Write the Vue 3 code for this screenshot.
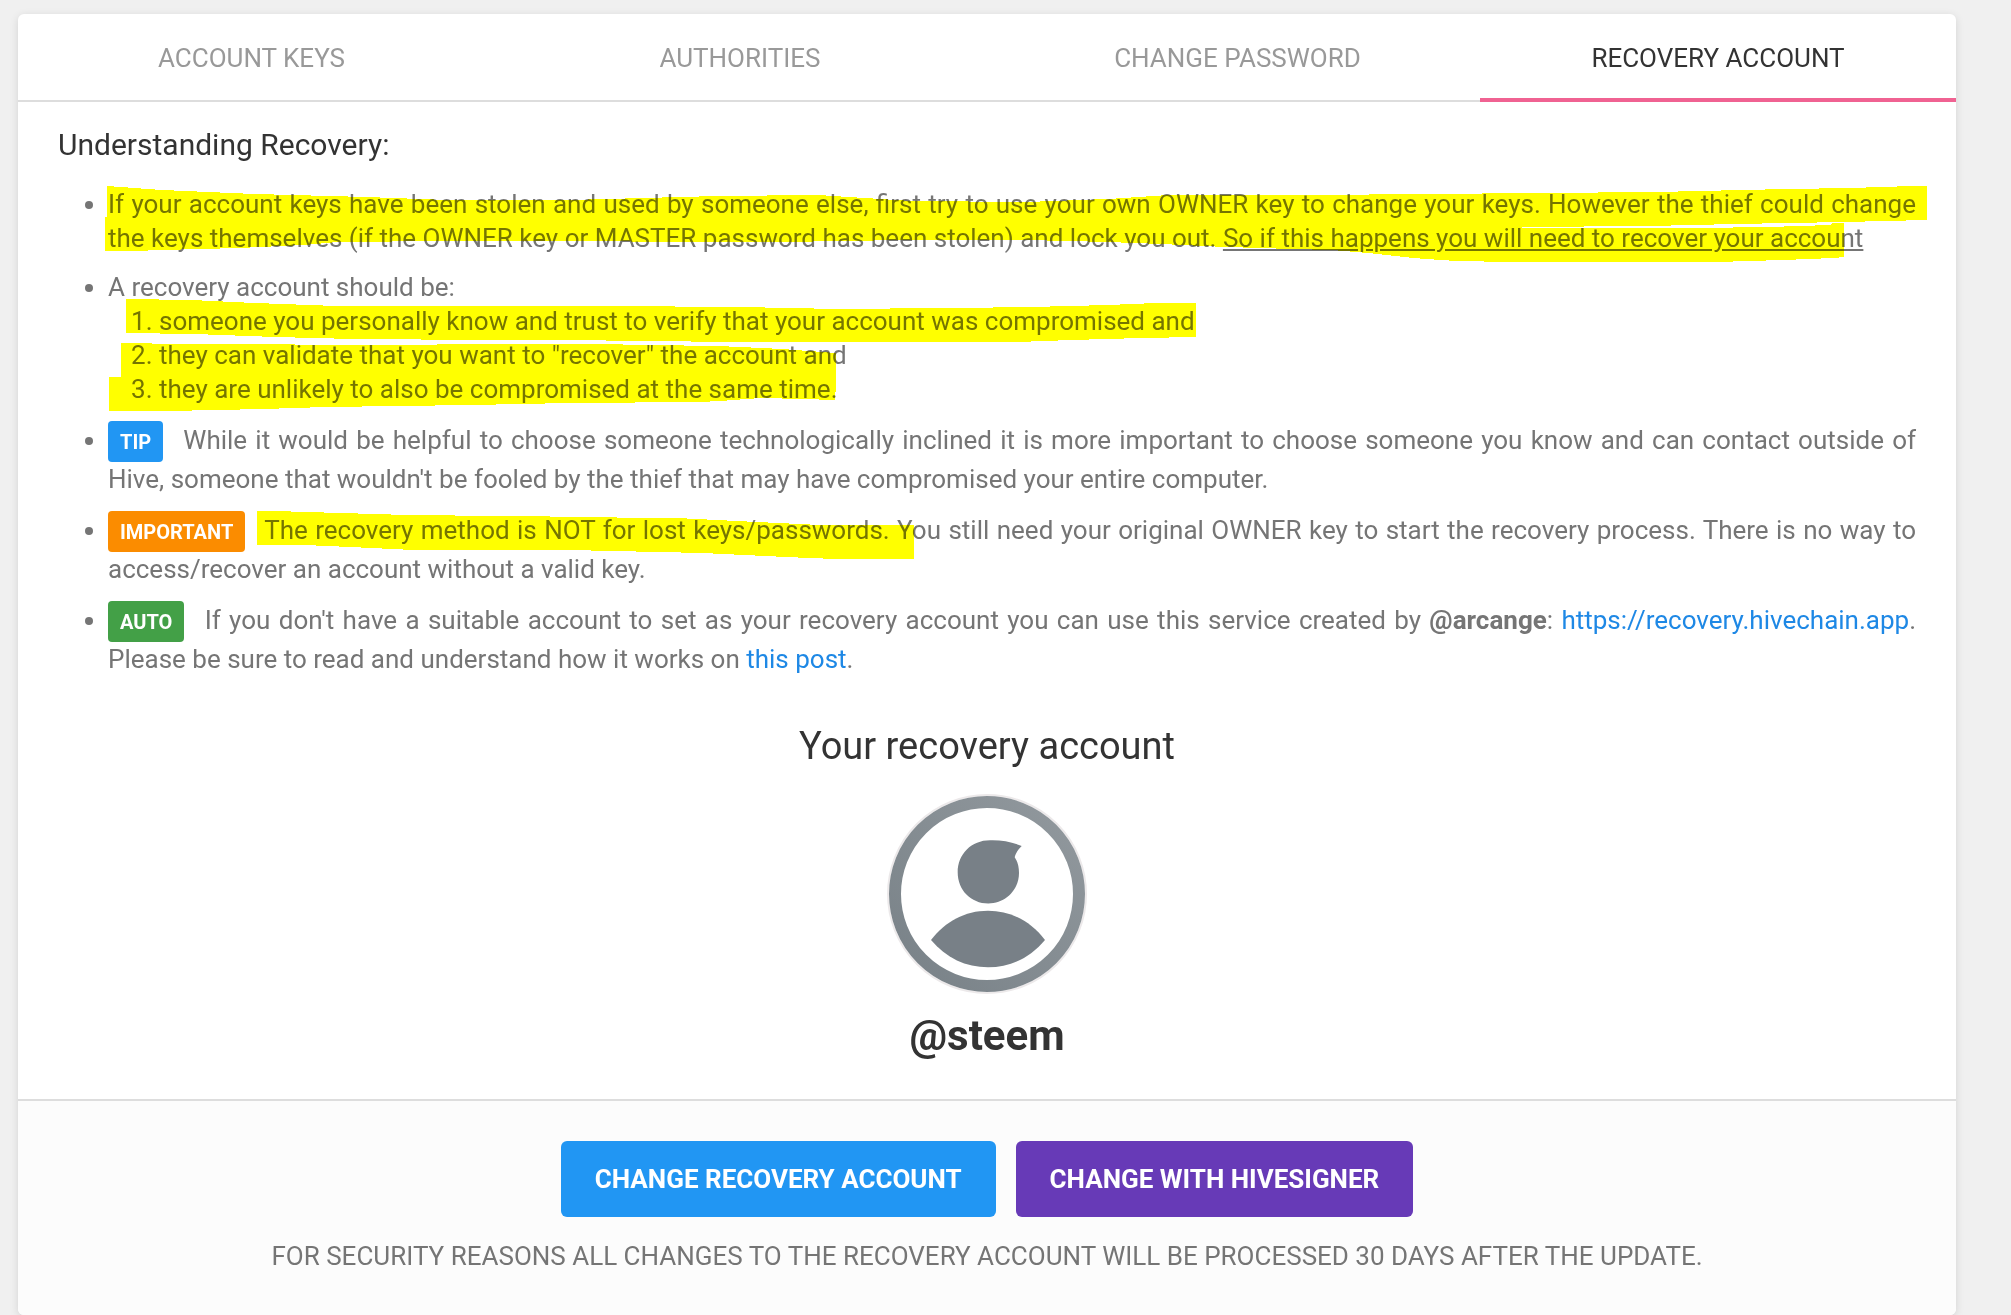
<script setup>
const tabs = [
  { label: 'Account keys', href: '#keys' },
  { label: 'Authorities', href: '#authorities' },
  { label: 'Change password', href: '#password' },
  { label: 'Recovery account', href: '#recovery', active: true },
]

// Marker strokes drawn over the list, in the order they appear.
const strokes = [
  '107,186 162,190 255,194 366,197 447,200 570,200 717,196 818,195 912,201 1026,202 1108,199 1169,195 1312,195 1540,193 1656,192 1787,189 1851,188 1912,186 1927,186 1927,220 1844,222 1735,224 1649,226 1522,227 1522,228 1697,228 1769,227 1830,225 1833,223 1844,223 1844,257 1833,258 1783,260 1717,262 1511,262 1456,261 1413,258 1368,253 1332,250 1292,249 1226,247 1161,244 1108,242 1026,240 904,240 782,242 692,242 570,241 447,241 337,242 304,245 239,248 162,250 133,251 105,251 105,217 107,217',
  '126,299 191,300 255,303 337,306 633,306 717,307 810,308 818,309 961,308 1026,307 1073,306 1135,304 1153,303 1196,303 1196,337 1141,338 1071,340 1018,342 731,342 651,341 561,340 488,340 353,339 276,337 194,334 126,333',
  '121,343 182,344 406,345 468,344 594,344 651,345 717,346 741,347 782,349 836,353 836,385 835,400 802,399 761,398 720,401 700,402 570,403 472,405 325,407 264,409 168,411 109,411 109,377 121,377',
  '257,511 274,511 341,513 407,515 597,517 637,518 677,518 757,522 820,525 914,525 914,559 835,559 786,557 703,553 614,551 568,550 413,550 350,547 304,545 257,545',
]
</script>

<template>
  <main class="page">
    <section class="card">
      <nav class="tabs">
        <a
          v-for="tab in tabs"
          :key="tab.href"
          :href="tab.href"
          class="tab"
          :class="{ active: tab.active }"
        >{{ tab.label }}</a>
      </nav>

      <div class="body">
        <h2 class="heading">Understanding Recovery:</h2>

        <div class="notes">
          <ul class="list">
            <li>
              If your account keys have been stolen and used by someone else, first try to use your own OWNER key to
              change your keys. However the thief could change the keys themselves (if the OWNER key or MASTER password
              has been stolen) and lock you out. <u>So if this happens you will need to recover your account</u>
            </li>
            <li>
              A recovery account should be:
              <ol class="sublist">
                <li>someone you personally know and trust to verify that your account was compromised and</li>
                <li>they can validate that you want to "recover" the account and</li>
                <li>they are unlikely to also be compromised at the same time.</li>
              </ol>
            </li>
            <li>
              <span class="badge tip">TIP</span> While it would be helpful to choose someone technologically inclined
              it is more important to choose someone you know and can contact outside of Hive, someone that wouldn't be
              fooled by the thief that may have compromised your entire computer.
            </li>
            <li>
              <span class="badge important">IMPORTANT</span> The recovery method is NOT for lost keys/passwords. You
              still need your original OWNER key to start the recovery process. There is no way to access/recover an
              account without a valid key.
            </li>
            <li>
              <span class="badge auto">AUTO</span> If you don't have a suitable account to set as your recovery account
              you can use this service created by <b>@arcange</b>:
              <a class="link" href="https://recovery.hivechain.app">https://recovery.hivechain.app</a>. Please be sure
              to read and understand how it works on <a class="link" href="#post">this post</a>.
            </li>
          </ul>

          <svg class="marker" width="1869" height="380" viewBox="58 187 1869 380" aria-hidden="true">
            <polygon v-for="(points, i) in strokes" :key="i" :points="points" />
          </svg>
        </div>

        <div class="account">
          <h1 class="title">Your recovery account</h1>
          <svg class="avatar" width="200" height="200" viewBox="0 0 200 200" aria-hidden="true">
            <defs>
              <linearGradient id="ring" x1="0" y1="1" x2="1" y2="0">
                <stop offset="0" stop-color="#788187" />
                <stop offset="1" stop-color="#92999e" />
              </linearGradient>
            </defs>
            <circle cx="100" cy="100" r="99" fill="#fff" stroke="#ece9ea" stroke-width="2" />
            <circle cx="100" cy="100" r="92" fill="none" stroke="url(#ring)" stroke-width="12" />
            <path
              d="M134.700 52C131.500 55 128.500 59 127.700 63.300C130.800 68 132 73 132 79C132 96 118.500 109.500 101.300 109.500C84 109.500 70.700 96 70.700 78.500C70.700 60 84.500 46.300 103 46.300C114 45.900 125 48 134.700 52Z"
              fill="#788087"
            />
            <path
              d="M44 146C58 127.500 78 116.700 101 116.700C124 116.700 144 127.500 158 146C143 164 123 173.300 101 173.300C79 173.300 59 164 44 146Z"
              fill="#788087"
            />
          </svg>
          <p class="name">@steem</p>
        </div>
      </div>

      <footer class="footer">
        <div class="actions">
          <button type="button" class="btn primary">Change recovery account</button>
          <button type="button" class="btn signer">Change with Hivesigner</button>
        </div>
        <p class="notice">For security reasons all changes to the recovery account will be processed 30 days after the update.</p>
      </footer>
    </section>
  </main>
</template>

<style>
body {
  margin: 0;
  background: #f0f0f0;
}
</style>

<style scoped>
.page {
  padding: 14px 55px 0 18px;
  font-family: Roboto, "Liberation Sans", sans-serif;
  font-size: 26px;
  line-height: 34px;
  color: #757575;
}

.card {
  background: #fff;
  border-radius: 6px;
  box-shadow: 0 2px 8px rgba(0, 0, 0, 0.12);
}

.tabs {
  display: grid;
  grid-template-columns: 467fr 510fr 485fr 476fr;
  box-shadow: inset 0 -2px #ddd;
}

.tab {
  box-sizing: border-box;
  height: 88px;
  padding-top: 27px;
  border-bottom: 4px solid transparent;
  color: #999;
  text-align: center;
  text-decoration: none;
  text-transform: uppercase;
}

.tab.active {
  border-color: #f06292;
  color: #333;
}

.body {
  padding: 23px 40px 38px;
}

.heading {
  margin: 0 0 22px;
  font-size: 30px;
  font-weight: 400;
  line-height: 40px;
  color: #333;
}

.notes {
  position: relative;
}

.list {
  margin: 0;
  padding: 0 0 0 50px;
  text-align: justify;
}

.list > li {
  margin-bottom: 15px;
}

.sublist {
  margin: 0;
  padding-left: 51px;
}

.badge {
  display: inline-block;
  margin-right: 12px;
  padding: 10px 12px 8px;
  border-radius: 4px;
  font-size: 20px;
  font-weight: 700;
  line-height: 23px;
  color: #fff;
}

.tip {
  background: #2196f3;
}

.important {
  background: #fb8c00;
}

.auto {
  background: #43a047;
}

.link {
  color: #1e88e5;
  text-decoration: none;
}

.marker {
  position: absolute;
  top: 0;
  left: 0;
  overflow: visible;
  fill: #ff0;
  shape-rendering: crispEdges;
  mix-blend-mode: multiply;
  pointer-events: none;
}

.account {
  display: flex;
  flex-direction: column;
  align-items: center;
  margin-top: 45px;
}

.title {
  margin: 0;
  font-size: 38px;
  font-weight: 400;
  line-height: 50px;
  color: #333;
}

.avatar {
  margin: 23px 0 17px;
}

.name {
  margin: 0;
  font-size: 42px;
  font-weight: 700;
  line-height: 50px;
  color: #333;
}

.footer {
  padding: 40px 40px 42px;
  border-top: 2px solid #ddd;
  border-radius: 0 0 6px 6px;
  background: #fcfcfc;
  text-align: center;
  text-transform: uppercase;
}

.actions {
  display: flex;
  justify-content: center;
  gap: 20px;
  margin-bottom: 22px;
}

.btn {
  padding: 21px 34px;
  border: 0;
  border-radius: 6px;
  font-family: inherit;
  font-size: 26px;
  font-weight: 700;
  line-height: 34px;
  text-transform: inherit;
  color: #fff;
  cursor: pointer;
}

.primary {
  background: #2196f3;
}

.signer {
  background: #673ab7;
}

.notice {
  margin: 0;
}
</style>
